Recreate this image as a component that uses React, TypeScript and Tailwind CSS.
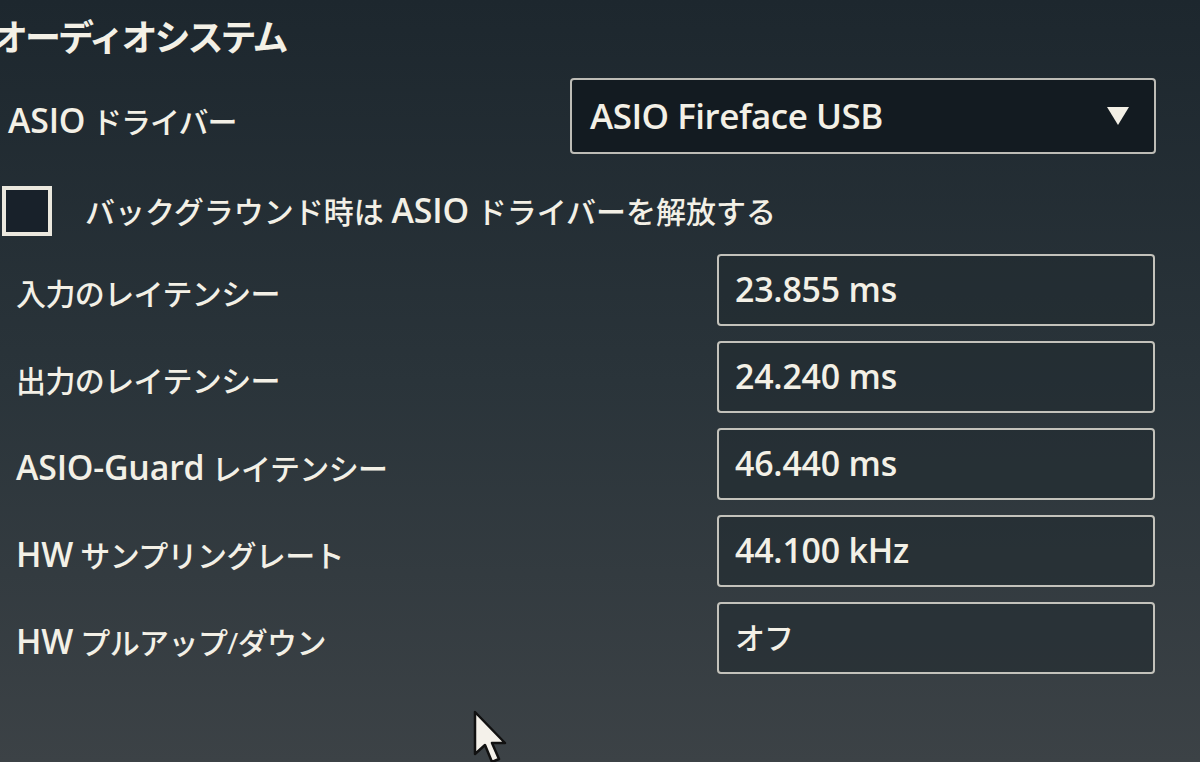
import React from "react";

const font = "font-['Open_Sans','Noto_Sans_CJK_JP',sans-serif]";

// Latin runs are drawn a bit larger and heavier than the kana, as in the UI font
const mix = (text: string) =>
  text.split(/([A-Za-z0-9.\-\/]+(?: [A-Za-z0-9.\-\/]+)*)/).map((part, i) =>
    /[A-Za-z0-9]/.test(part) ? (
      <span key={i} className="text-[1.13em] font-semibold tracking-[-0.2px]">
        {part}
      </span>
    ) : (
      <span key={i}>{part}</span>
    )
  );

const rows = [
  { label: "入力のレイテンシー", value: "23.855 ms" },
  { label: "出力のレイテンシー", value: "24.240 ms" },
  { label: "ASIO-Guard レイテンシー", value: "46.440 ms" },
  { label: "HW サンプリングレート", value: "44.100 kHz" },
  { label: "HW プルアップ/ダウン", value: "オフ" },
];

const Cursor = () => (
  <svg
    className="absolute left-[472px] top-[710px]"
    width="40"
    height="60"
    viewBox="0 0 40 60"
  >
    <path
      d="M3 2 L3 44 L13 35 L20 52 L27 49 L20 33 L33 33 Z"
      fill="#f4f1ea"
      stroke="#111"
      strokeWidth="2.5"
      strokeLinejoin="round"
    />
  </svg>
);

const App = () => {
  return (
    <div
      className={`relative w-[1200px] h-[762px] overflow-hidden bg-gradient-to-b from-[#1d272e] via-[#2a343a] to-[#3c4246] text-[#f3f0e6] ${font}`}
    >
      <div className="flex flex-col">
        <h1 className="-ml-[8px] mt-[15px] text-[36px] leading-[46px] font-semibold tracking-[-3px]">
          オーディオシステム
        </h1>

        <div className="flex items-center mt-[17px]">
          <span className="w-[570px] pl-[8px] pt-[10px] text-[30px] leading-[40px] font-medium tracking-[-1px]">
            {mix("ASIO ドライバー")}
          </span>
          <div className="flex items-center justify-between w-[586px] h-[76px] px-[18px] rounded-[4px] border-2 border-[#bdbcb6] bg-[#131b21]">
            <span className="text-[35px] font-semibold tracking-[-0.5px]">
              ASIO Fireface USB
            </span>
            <svg width="24" height="20" viewBox="0 0 24 20" className="mr-[6px]">
              <polygon points="1,1 23,1 12,19" fill="#f3f0e6" />
            </svg>
          </div>
        </div>

        <div className="flex items-center mt-[32px] h-[50px]">
          <div className="ml-[2px] w-[50px] h-[50px] border-[4px] border-[#ebe8de] bg-[#18212a]" />
          <span className="ml-[33px] text-[30px] leading-[40px] font-medium">
            {mix("バックグラウンド時は ASIO ドライバーを解放する")}
          </span>
        </div>

        <div className="flex flex-col gap-[15px] mt-[18px]">
          {rows.map((r) => (
            <div key={r.label} className="flex items-center">
              <span className="w-[717px] pl-[16px] pt-[8px] text-[30px] leading-[40px] font-medium tracking-[-0.6px]">
                {mix(r.label)}
              </span>
              <div className="flex items-center w-[438px] h-[72px] pl-[16px] rounded-[4px] border-2 border-[#c3c2bb] bg-[#222b31]/60">
                <span className="text-[30px] leading-[40px] font-medium tracking-[-1px]">
                  {mix(r.value)}
                </span>
              </div>
            </div>
          ))}
        </div>
      </div>
      <Cursor />
    </div>
  );
};

export default App;
